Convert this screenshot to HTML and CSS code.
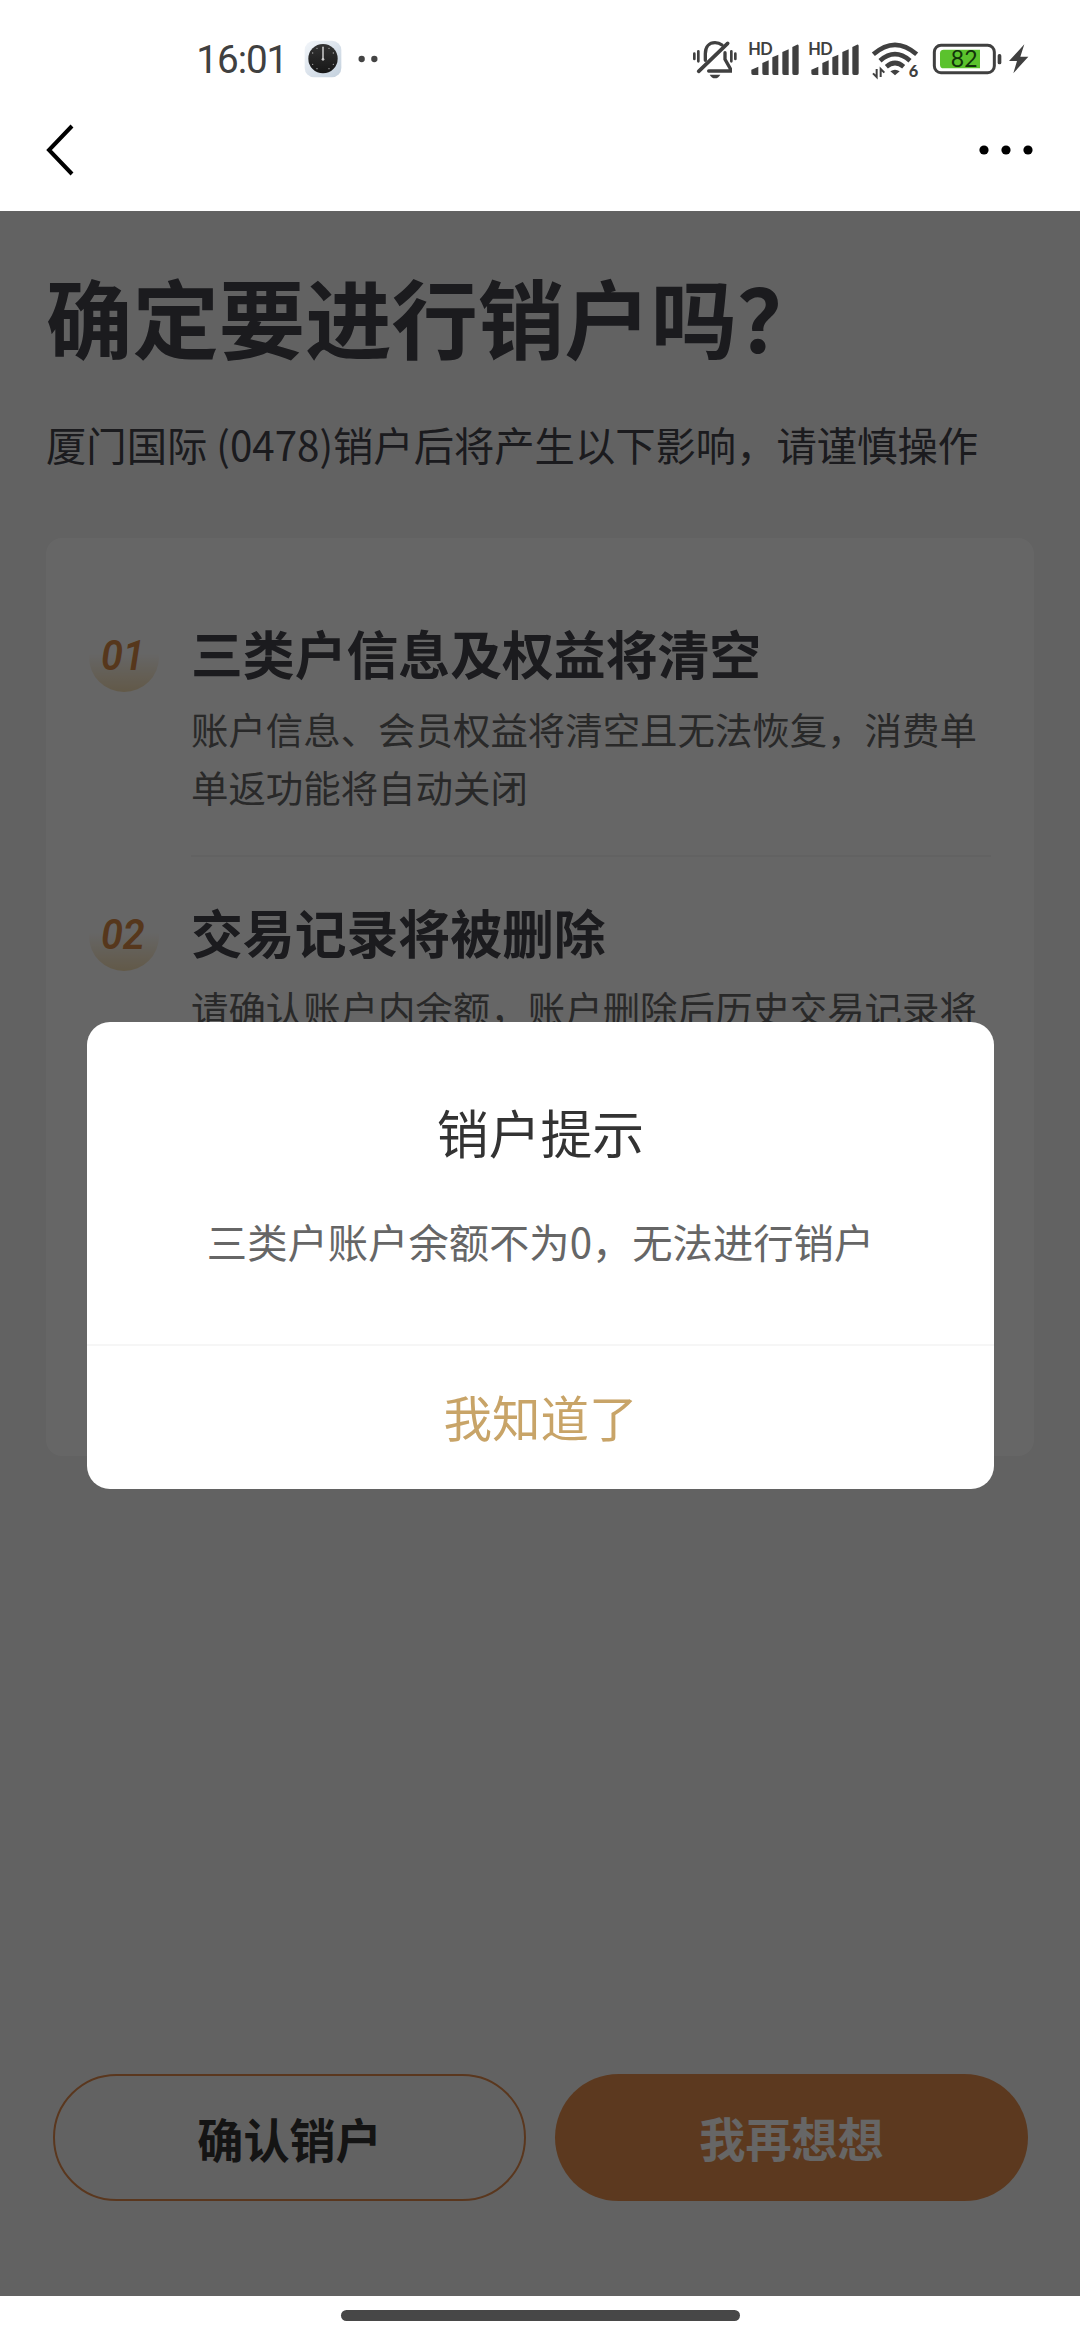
FILE: index.html
```html
<!DOCTYPE html>
<html lang="zh-CN">
<head>
<meta charset="utf-8">
<title>销户</title>
<link rel="stylesheet" href="styles.css">
</head>
<body>
<div class="screen">
  <div class="status">
    <svg class="status-left" width="220" height="80" viewBox="0 0 660 240">
      <defs>
        <linearGradient id="tile" x1="0" y1="0" x2="1" y2="1"><stop offset="0" stop-color="#f3f6fa"/><stop offset="1" stop-color="#c3d0dd"/></linearGradient>
        <linearGradient id="dial" x1="0" y1="0" x2="0" y2="1"><stop offset="0" stop-color="#333"/><stop offset="1" stop-color="#161616"/></linearGradient>
      </defs>
      <text class="clock" x="49" y="158" textLength="276" lengthAdjust="spacing">16:01</text>
      <rect x="374" y="62" width="110" height="110" rx="28" fill="url(#tile)"/>
      <circle cx="429" cy="116" r="44" fill="url(#dial)"/>
      <g fill="#aaa"><circle cx="411" cy="85" r="2"/><circle cx="447" cy="85" r="2"/><circle cx="398" cy="99" r="2"/><circle cx="460" cy="99" r="2"/><circle cx="398" cy="133" r="2"/><circle cx="460" cy="133" r="2"/><circle cx="411" cy="146" r="2"/><circle cx="447" cy="146" r="2"/></g>
      <path d="M429 82V118" stroke="#bcbcbc" stroke-width="5" stroke-linecap="round"/>
      <circle cx="429" cy="118" r="4" fill="#ccc"/>
      <circle cx="545" cy="117" r="9.5" fill="#444"/><circle cx="583" cy="117" r="9.5" fill="#444"/>
    </svg>
    <div class="status-right">
      <svg width="55" height="40" viewBox="36 60 165 120" fill="none" stroke="#404040" stroke-width="10" stroke-linecap="round">
        <path d="M76 121V101C76 80 88 68 105 68C114 68 121 71 126 75M135 98V118L151 146V153H86"/>
        <path d="M143 70L56 154" stroke-width="11"/>
        <path d="M43 101V117M55 94V124M154 94V124M166 101V117" stroke-width="8"/>
        <path d="M89 164H121Q115 175 105 175T89 164Z" fill="#404040" stroke="none"/>
      </svg>
      <svg width="60" height="40" viewBox="201 60 180 120" fill="#404040">
        <text class="hd" x="205" y="105" textLength="73">HD</text>
        <path d="M214 149L235 140V165H219Q214 165 214 160ZM247 129L266 121V165H252Q247 165 247 160ZM277 112L295 104V165H282Q277 165 277 160ZM307 96L326 88V165H312Q307 165 307 160ZM337 81L351 74Q356 72 356 78V160Q356 165 351 165H342Q337 165 337 160Z"/>
      </svg>
      <svg width="60" height="40" viewBox="201 60 180 120" fill="#404040">
        <text class="hd" x="205" y="105" textLength="73">HD</text>
        <path d="M214 149L235 140V165H219Q214 165 214 160ZM247 129L266 121V165H252Q247 165 247 160ZM277 112L295 104V165H282Q277 165 277 160ZM307 96L326 88V165H312Q307 165 307 160ZM337 81L351 74Q356 72 356 78V160Q356 165 351 165H342Q337 165 337 160Z"/>
      </svg>
      <svg width="60" height="40" viewBox="561 60 180 120" fill="none" stroke="#404040">
        <path d="M580 103Q645 46 710 103M600 122Q645 83 690 122M619 140Q645 118 671 140" stroke-width="14"/>
        <path d="M631 154Q645 145 659 154L645 166Z" fill="#404040" stroke="none"/>
        <path d="M590 147V171L579 160M602 171V147L613 158" stroke-width="6"/>
        <text class="wifi-six" x="686" y="170">6</text>
      </svg>
      <svg width="105" height="40" viewBox="741 60 315 120">
        <rect x="763" y="76" width="180" height="82" rx="20" fill="none" stroke="#404040" stroke-width="9"/>
        <path d="M791 89H900V145H791Q780 145 780 134V100Q780 89 791 89Z" fill="#5bc22d"/>
        <rect x="953" y="102" width="11" height="31" rx="5" fill="#404040"/>
        <text class="battery-level" x="812" y="142" textLength="81">82</text>
        <path d="M1033 73L987 123H1011L1000 160L1045 110H1021Z" fill="#404040"/>
      </svg>
    </div>
  </div>
  <div class="nav">
    <svg width="40" height="60" viewBox="0 0 40 60" fill="none" stroke="#000" stroke-width="4"><path d="M32 6L9 30L32 54"/></svg>
    <svg width="60" height="20" viewBox="0 0 60 20"><circle cx="8" cy="10" r="4.6"/><circle cx="30" cy="10" r="4.6"/><circle cx="52" cy="10" r="4.6"/></svg>
  </div>
  <div class="page">
    <h1 class="title">确定要进行销户吗？</h1>
    <p class="subtitle">厦门国际 (0478)销户后将产生以下影响，请谨慎操作</p>
    <div class="card">
      <div class="item">
        <div class="badge"><span class="num">01</span></div>
        <div class="item-body">
          <h2 class="item-title">三类户信息及权益将清空</h2>
          <p class="item-desc">账户信息、会员权益将清空且无法恢复，消费单<br>单返功能将自动关闭</p>
        </div>
      </div>
      <div class="item">
        <div class="badge"><span class="num">02</span></div>
        <div class="item-body last">
          <h2 class="item-title">交易记录将被删除</h2>
          <p class="item-desc">请确认账户内余额，账户删除后历史交易记录将</p>
        </div>
      </div>
    </div>
    <div class="actions">
      <div class="btn outline">确认销户</div>
      <div class="btn solid">我再想想</div>
    </div>
    <div class="overlay">
      <div class="dialog">
        <div class="dialog-title">销户提示</div>
        <div class="dialog-text">三类户账户余额不为0，无法进行销户</div>
        <div class="dialog-ok">我知道了</div>
      </div>
    </div>
  </div>
  <div class="home"><div class="home-bar"></div></div>
</div>
</body>
</html>
```
FILE: styles.css
```css
* { box-sizing: border-box; margin: 0; padding: 0; }
body { font-family: "Noto Sans CJK SC", sans-serif; background: #fff; }
svg { display: block; flex: none; }
.screen { width: 1080px; height: 2340px; display: flex; flex-direction: column; overflow: hidden; }
.status { height: 100px; display: flex; justify-content: space-between; padding: 20px 48px 0 180px; }
.status-right { display: flex; padding-top: 20px; }
.clock { font-family: Roboto, sans-serif; font-size: 116px; fill: #404040; }
.hd { font-family: Lato, sans-serif; font-weight: 700; font-size: 49px; }
.wifi-six { font-family: Lato, sans-serif; font-weight: 900; font-size: 49px; fill: #404040; stroke: none; }
.battery-level { font-family: Lato, sans-serif; font-size: 69px; fill: #12330a; }
.nav { height: 111px; display: flex; align-items: center; justify-content: space-between; padding: 0 44px 11px 40px; }
.page { position: relative; height: 2085px; background: #f5f5f5; padding: 0 46px; display: flex; flex-direction: column; }
.title { margin-top: 45px; height: 120px; font-size: 86.4px; line-height: 120px; font-weight: 700; color: #44444c; white-space: nowrap; }
.subtitle { margin-top: 38px; height: 60px; font-size: 40.32px; line-height: 60px; color: #44444c; white-space: nowrap; }
.card { margin-top: 64px; height: 918px; padding: 78px 43px 0; background: #fff; border-radius: 16px; }
.item { display: flex; gap: 32px; }
.item + .item { padding-top: 38px; }
.badge { flex: none; width: 70px; height: 70px; margin-top: 6px; border-radius: 50%; display: flex; justify-content: center; background: linear-gradient(180deg, rgba(240,205,140,0) 45%, rgba(240,205,140,.65) 100%); }
.num { font-family: Roboto, sans-serif; font-weight: 600; font-style: italic; font-size: 43px; line-height: 50px; height: 58px; color: #d88a48; transform: translateX(-1px) scaleX(.92); padding-top: 8px; }
.item-body { flex: none; width: 800px; padding-bottom: 39px; border-bottom: 2px solid #f6f6f6; }
.item-body.last { border: 0; }
.item-title { font-size: 51.84px; line-height: 73px; height: 72px; font-weight: 700; color: #44444c; white-space: nowrap; }
.item-desc { margin-top: 12px; font-size: 37.44px; line-height: 58px; color: #666; white-space: nowrap; }
.actions { margin-top: 618px; padding: 0 6px 0 7px; display: grid; grid-template-columns: 1fr 1fr; gap: 29px; }
.btn { height: 127px; border-radius: 64px; text-align: center; font-size: 46.08px; font-weight: 700; line-height: 127px; }
.outline { border: 2px solid #e08a4b; color: #333; line-height: 124px; }
.solid { background: #e6904f; color: #fff; }
.overlay { position: absolute; inset: 0; background: rgba(0,0,0,.6); display: flex; justify-content: center; align-items: flex-start; padding: 811px 0 0 1px; }
.dialog { width: 907px; height: 467px; background: #fff; border-radius: 23px; text-align: center; }
.dialog-title { padding-top: 74px; font-size: 51.84px; line-height: 72px; color: #333; }
.dialog-text { margin-top: 43px; font-size: 40.32px; line-height: 60px; color: #666; }
.dialog-ok { margin-top: 73px; border-top: 2px solid #f6f6f6; font-size: 48.5px; line-height: 141px; color: #c8a468; }
.home { height: 44px; display: flex; justify-content: center; padding-top: 14px; }
.home-bar { width: 399px; height: 11px; border-radius: 6px; background: #474747; }
```
